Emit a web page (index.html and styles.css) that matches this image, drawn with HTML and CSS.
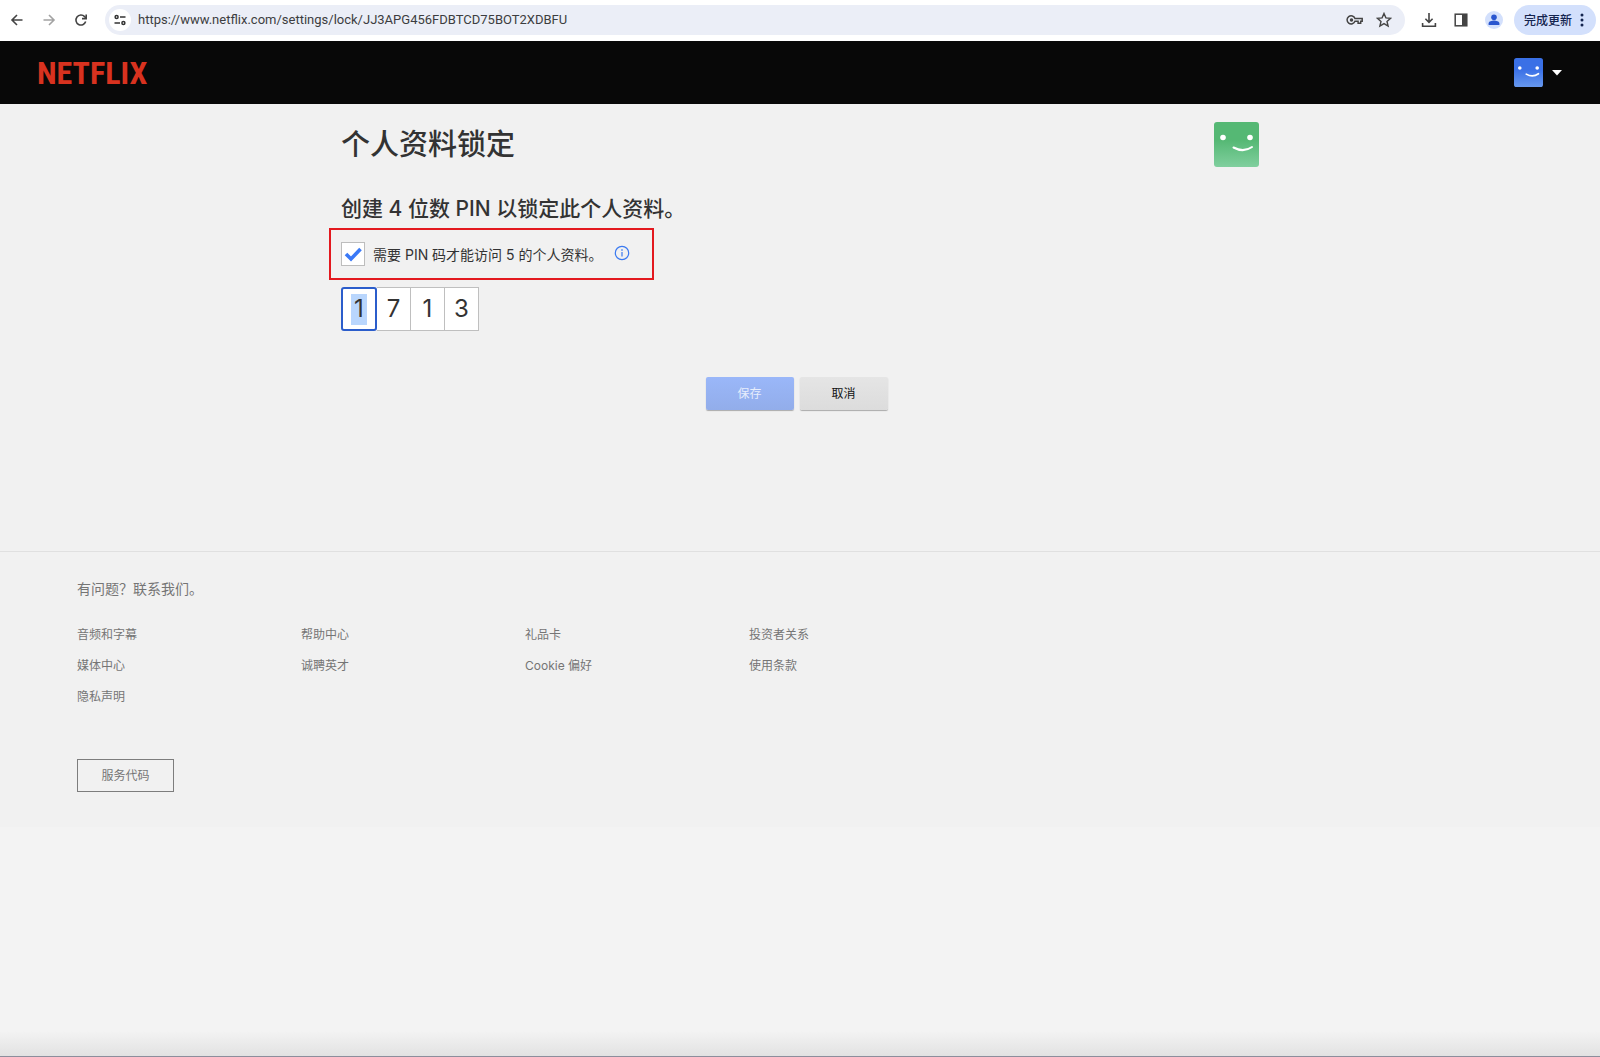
FILE: index.html
```html
<!DOCTYPE html>
<html lang="zh-CN">
<head>
<meta charset="utf-8">
<meta name="viewport" content="width=device-width, initial-scale=1">
<title>个人资料锁定 - Netflix</title>
<link rel="stylesheet" href="styles.css">
</head>
<body>
<div class="toolbar">
  <div class="nav-buttons">
    <button class="icon-button" type="button" aria-label="后退"><svg width="16" height="16" viewBox="0 0 16 16" fill="none" stroke="#444" stroke-width="1.6"><path d="M13.5 8H3.2M8 3L3 8l5 5"/></svg></button>
    <button class="icon-button" type="button" aria-label="前进"><svg width="16" height="16" viewBox="0 0 16 16" fill="none" stroke="#a3a3a3" stroke-width="1.6"><path d="M2.5 8h10.3M8 3l5 5-5 5"/></svg></button>
    <button class="icon-button" type="button" aria-label="重新加载"><svg width="16" height="16" viewBox="0 0 16 16" fill="none" stroke="#444" stroke-width="1.6"><path d="M12.7 9.6A5 5 0 1 1 11.6 4.6L13 6"/><path d="M13.2 2.4v4.2H9"/></svg></button>
  </div>
  <div class="address-bar">
    <button class="site-info" type="button" aria-label="网站信息"><svg width="12" height="12" viewBox="0 0 12 12" fill="none" stroke="#333" stroke-width="1.5"><circle cx="2.6" cy="3" r="1.5"/><path d="M6 3h5.5M.5 9H6"/><circle cx="9.4" cy="9" r="1.5"/></svg></button>
    <input class="url" type="text" aria-label="地址" value="https://www.netflix.com/settings/lock/JJ3APG456FDBTCD75BOT2XDBFU">
    <button class="icon-button" type="button" aria-label="密码"><svg width="18" height="16" viewBox="0 0 18 16" fill="none" stroke="#444" stroke-width="1.5"><path d="M9 6.4h7.2v2.900h-1.500v2h-2.600v-2H9A4.100 4.100 0 1 1 9 6.400z"/><circle cx="5.500" cy="7.900" r="1" fill="#444"/></svg></button>
    <button class="icon-button" type="button" aria-label="收藏"><svg width="16" height="16" viewBox="0 0 16 16" fill="none" stroke="#444" stroke-width="1.4"><path d="M8 1.500l1.900 4.400 4.700.400-3.600 3.100 1.100 4.600L8 11.600 3.900 14 5 9.400 1.400 6.300l4.700-.400z"/></svg></button>
  </div>
  <div class="tools">
    <button class="icon-button" type="button" aria-label="下载"><svg width="16" height="16" viewBox="0 0 16 16" fill="none" stroke="#444" stroke-width="1.6"><path d="M8 1v9.300M4.400 6.800L8 10.400l3.600-3.600M1.600 11v3.200h12.800V11"/></svg></button>
    <button class="icon-button" type="button" aria-label="侧边栏"><svg width="16" height="16" viewBox="0 0 16 16"><rect x="2.200" y="2.200" width="11.600" height="11.600" fill="none" stroke="#444" stroke-width="1.500"/><path d="M9 2h5v12H9z" fill="#444"/></svg></button>
    <button class="icon-button" type="button" aria-label="用户"><svg width="18" height="18" viewBox="0 0 18 18"><circle cx="9" cy="9" r="9" fill="#d3e0fc"/><circle cx="9" cy="6.200" r="2.800" fill="#2a56cf"/><path d="M3.600 14v-1.500c0-2 3.400-2.900 5.400-2.900s5.400.900 5.400 2.900V14z" fill="#2a56cf"/></svg></button>
  </div>
  <button class="update" type="button">完成更新<svg width="4" height="14" viewBox="0 0 4 14" fill="#14244f"><circle cx="2" cy="2" r="1.500"/><circle cx="2" cy="7" r="1.500"/><circle cx="2" cy="12" r="1.500"/></svg></button>
</div>

<header class="site-header">
  <a class="logo" href="#">NETFLIX</a>
  <button class="account" type="button" aria-label="帐户">
    <svg width="29" height="29" viewBox="0 0 45 45"><defs><linearGradient id="blue" x2="0" y2="1"><stop offset=".4" stop-color="#3a70e6"/><stop offset="1" stop-color="#6798ee"/></linearGradient></defs><rect width="45" height="45" rx="4" fill="url(#blue)"/><circle cx="9" cy="15.500" r="2.800" fill="#fff"/><circle cx="36" cy="15.500" r="2.800" fill="#fff"/><path d="M19 25q10 6 19-.600" fill="none" stroke="#fff" stroke-width="2.600" stroke-linecap="round"/></svg>
    <svg width="10" height="6" viewBox="0 0 10 6"><path d="M0 0h10L5 5.500z" fill="#fff"/></svg>
  </button>
</header>

<main class="content">
  <div class="title-row">
    <h1>个人资料锁定</h1>
    <svg width="45" height="45" viewBox="0 0 45 45"><defs><linearGradient id="green" x2="0" y2="1"><stop offset=".4" stop-color="#55b874"/><stop offset="1" stop-color="#80cf9e"/></linearGradient></defs><rect width="45" height="45" rx="3" fill="url(#green)"/><circle cx="9" cy="15.500" r="2.800" fill="#fff"/><circle cx="36" cy="15.500" r="2.800" fill="#fff"/><path d="M19.500 25.500q10 5.500 18.500-.500" fill="none" stroke="#fff" stroke-width="2" stroke-linecap="round"/></svg>
  </div>
  <h2>创建 4 位数 PIN 以锁定此个人资料。</h2>
  <div class="require">
    <input class="tick" type="checkbox" id="require-pin" checked>
    <label for="require-pin">需要 PIN 码才能访问 5 的个人资料。</label>
    <button class="info" type="button" aria-label="详情"><svg width="16" height="16" viewBox="0 0 16 16" fill="none" stroke="#3a79f0" stroke-width="1.2"><circle cx="8" cy="8" r="6.700"/><path d="M8 7v4.500"/><path d="M8 4.300v1.400" stroke-width="1.400"/></svg></button>
  </div>
  <div class="pin">
    <input class="digit active" type="text" inputmode="numeric" maxlength="1" aria-label="PIN 第 1 位" value="1">
    <input class="digit" type="text" inputmode="numeric" maxlength="1" aria-label="PIN 第 2 位" value="7">
    <input class="digit" type="text" inputmode="numeric" maxlength="1" aria-label="PIN 第 3 位" value="1">
    <input class="digit" type="text" inputmode="numeric" maxlength="1" aria-label="PIN 第 4 位" value="3">
  </div>
  <div class="actions">
    <button class="button save" type="button">保存</button>
    <button class="button cancel" type="button">取消</button>
  </div>
</main>

<footer class="site-footer">
  <a class="contact" href="#">有问题？联系我们。</a>
  <ul class="links">
    <li><a href="#">音频和字幕</a></li>
    <li><a href="#">帮助中心</a></li>
    <li><a href="#">礼品卡</a></li>
    <li><a href="#">投资者关系</a></li>
    <li><a href="#">媒体中心</a></li>
    <li><a href="#">诚聘英才</a></li>
    <li><a href="#">Cookie 偏好</a></li>
    <li><a href="#">使用条款</a></li>
    <li><a href="#">隐私声明</a></li>
  </ul>
  <button class="service" type="button">服务代码</button>
</footer>
<div class="page-end"></div>
</body>
</html>
```
FILE: styles.css
```css
* {
  box-sizing: border-box;
}

body {
  margin: 0;
  min-height: 100vh;
  display: flex;
  flex-direction: column;
  background: #f3f3f3;
  color: #333;
  font-family: Inter, "Noto Sans CJK SC", sans-serif;
  font-size: 14px;
}

button {
  padding: 0;
  border: 0;
  background: none;
  font: inherit;
}

a {
  color: inherit;
  text-decoration: none;
}

svg {
  display: block;
  flex: none;
}

/* Browser toolbar */
.toolbar {
  display: flex;
  align-items: center;
  height: 41px;
  padding: 0 4px 2px 9px;
  background: #fff;
}

.nav-buttons {
  display: flex;
  gap: 16px;
  margin-right: 16px;
}

.icon-button {
  display: flex;
}

.address-bar {
  flex: 1;
  display: flex;
  align-items: center;
  gap: 12px;
  height: 30px;
  padding: 0 13px 0 4px;
  border-radius: 15px;
  background: #ebeef7;
}

.site-info {
  display: flex;
  align-items: center;
  justify-content: center;
  width: 22px;
  height: 22px;
  border-radius: 50%;
  background: #fff;
}

.url {
  flex: 1;
  min-width: 0;
  margin-left: -5px;
  padding: 0;
  border: 0;
  background: none;
  color: #3c3d40;
  font: 13px/20px Roboto, sans-serif;
}

.tools {
  display: flex;
  align-items: center;
  gap: 16px;
  margin: 0 11px 0 16px;
}

.update {
  display: flex;
  align-items: center;
  gap: 8px;
  height: 30px;
  padding: 0 12px 0 10px;
  border-radius: 15px;
  background: #d3e0fc;
  color: #14244f;
  font-size: 12px;
  font-weight: 500;
}

/* Site header */
.site-header {
  display: flex;
  align-items: center;
  justify-content: space-between;
  height: 63px;
  padding: 0 38px 0 37px;
  background: #080808;
}

.logo {
  color: #d8321f;
  font: 700 32px/60px "Roboto Condensed", "Open Sans Condensed", Roboto, sans-serif;
}

.account {
  display: flex;
  align-items: center;
  gap: 9px;
}

/* Profile lock form */
.content {
  width: 100%;
  max-width: 918px;
  margin: 0 auto;
  padding: 18px 0 141px;
}

.title-row {
  display: flex;
  align-items: center;
  justify-content: space-between;
  height: 45px;
}

h1 {
  margin: 0;
  font-size: 29px;
  font-weight: 500;
  line-height: 44px;
}

h2 {
  margin: 26px 0 4px;
  font-size: 21px;
  font-weight: 500;
  line-height: 31px;
}

.require {
  display: flex;
  align-items: center;
  width: fit-content;
  height: 52px;
  margin-left: -12px;
  padding: 0 22px 0 10px;
  border: 2px solid #e3191f;
}

.tick {
  appearance: none;
  width: 24px;
  height: 24px;
  margin: 0 8px 0 0;
  border: 1px solid #bdbdbd;
  background: #fff;
}

.tick:checked {
  background: #fff url("data:image/svg+xml,%3Csvg xmlns='http://www.w3.org/2000/svg' viewBox='0 0 22 22'%3E%3Cpath d='M4 11l5 5L18.500 6' fill='none' stroke='%233a79f7' stroke-width='3.600'/%3E%3C/svg%3E");
}

.info {
  margin: 0 0 2px 11px;
}

.pin {
  display: grid;
  grid-template-columns: 36px repeat(3, 34px);
  width: fit-content;
  height: 42px;
  margin-top: 7px;
}

.digit {
  min-width: 0;
  padding: 0;
  border: 1px solid #bfbfbf;
  border-left-width: 0;
  border-radius: 0;
  background: #fff;
  color: #333;
  font: 24px/40px Inter, sans-serif;
  text-align: center;
}

.digit.active {
  border: 2px solid #2b5dcb;
  border-radius: 3px;
  background: #fff linear-gradient(#b9d6fd, #b9d6fd) center / 16px 31px no-repeat;
}

.actions {
  display: flex;
  justify-content: center;
  gap: 6px;
  margin: 48px 7px 0 0;
}

.button {
  width: 88px;
  height: 33px;
  padding-bottom: 2px;
  border-radius: 2px;
  font-size: 12px;
}

.save {
  background: linear-gradient(#9ab7f9, #92adea);
  box-shadow: 0 1px 1px #aaa;
  color: #e6edfc;
}

.cancel {
  background: linear-gradient(#e5e5e5, #dcdcdc);
  box-shadow: 0 1px 1px #aaa;
  color: #111;
}

/* Footer */
.site-footer {
  padding: 25px 77px 35px;
  border-top: 1px solid #e0e0e0;
  color: #757575;
  font-size: 12px;
}

.content,
.site-footer {
  flex: none;
}

/* The form and the footer share one shade, full width */
.content {
  background: #f1f1f1;
  box-shadow: 0 0 0 100vmax #f1f1f1;
  clip-path: inset(0 -100vmax);
}

.site-footer {
  background: #f1f1f1;
}

.contact {
  display: block;
  font-size: 14px;
  line-height: 24px;
}

.links {
  display: grid;
  grid-template-columns: repeat(4, 1fr);
  max-width: 896px;
  row-gap: 11px;
  margin: 24px 0 52px;
  padding: 0;
  list-style: none;
  line-height: 20px;
}

.service {
  width: 97px;
  height: 33px;
  padding-bottom: 2px;
  border: 1px solid #7d7d7d;
  color: #757575;
}

.page-end {
  flex: none;
  height: 26px;
  margin-top: auto;
  border-bottom: 1px solid #8c8e9c;
  background: linear-gradient(#f3f3f3, #e2e2e2);
}
```
